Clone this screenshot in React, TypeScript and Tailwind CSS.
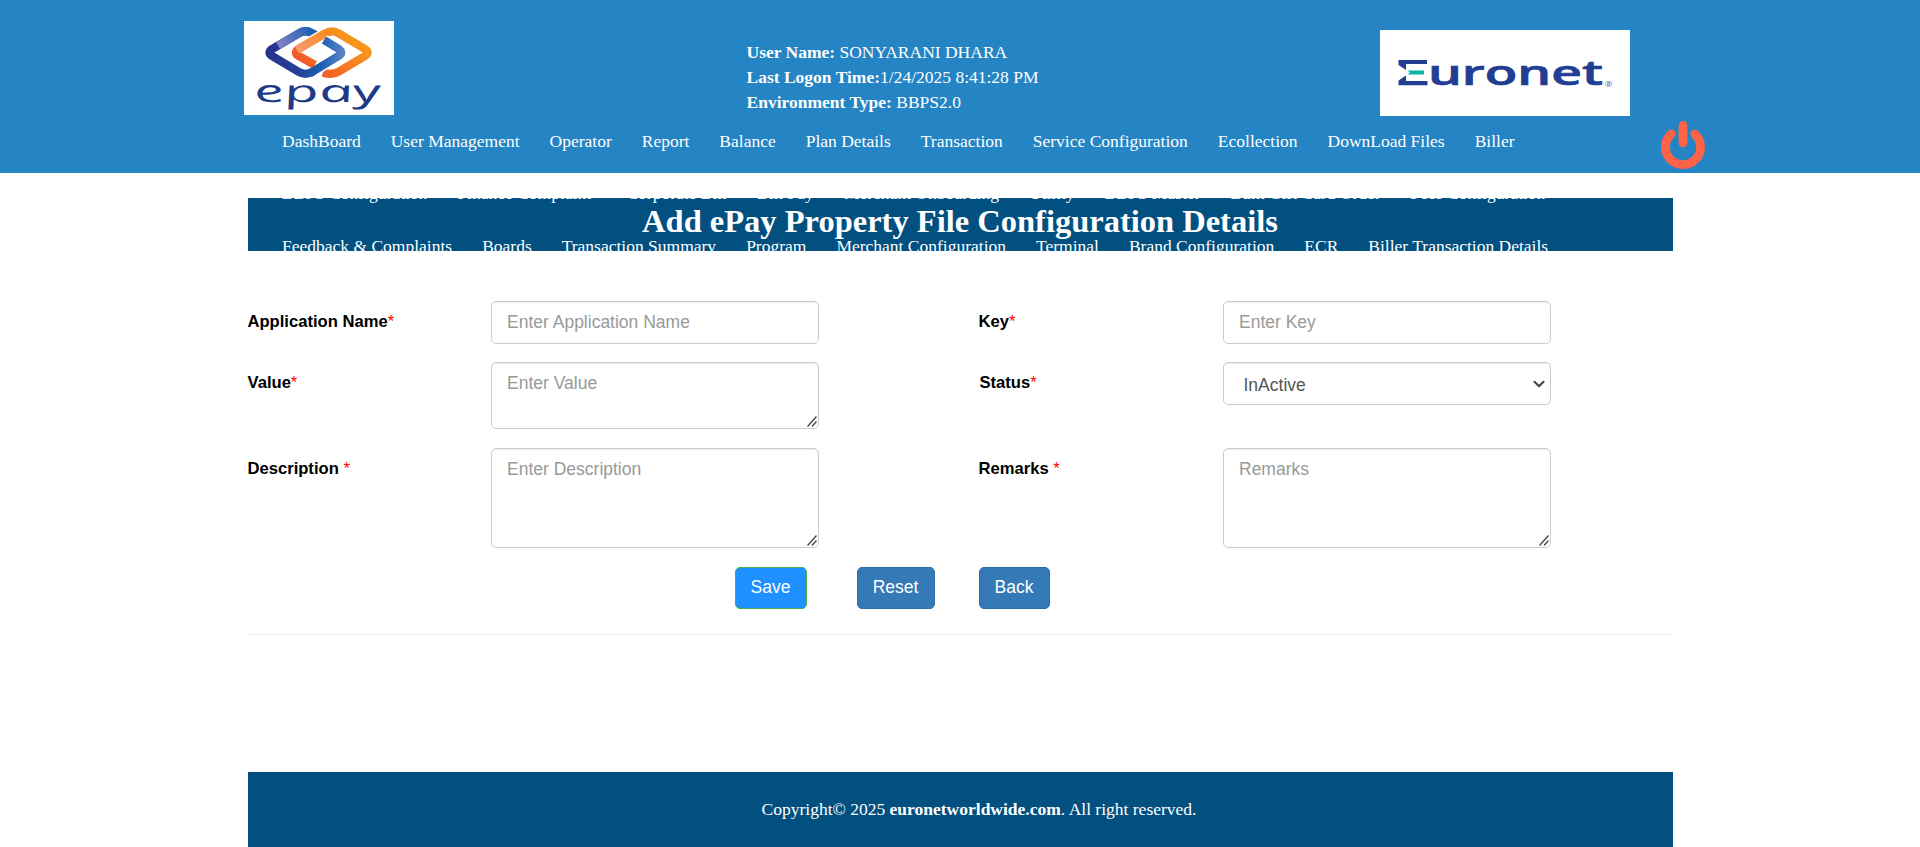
import React from "react";
import { ChevronDown } from "lucide-react";

const NAV_ROWS: string[][] = [
  [
    "DashBoard",
    "User Management",
    "Operator",
    "Report",
    "Balance",
    "Plan Details",
    "Transaction",
    "Service Configuration",
    "Ecollection",
    "DownLoad Files",
    "Biller",
  ],
  [
    "BBPS Configuration",
    "Finance Complaint",
    "Corporate Bill",
    "Bill Pay",
    "Merchant Onboarding",
    "Utility",
    "BBPS Master",
    "Bulk Gift Card Order",
    "Fees Configuration",
  ],
  [
    "Feedback & Complaints",
    "Boards",
    "Transaction Summary",
    "Program",
    "Merchant Configuration",
    "Terminal",
    "Brand Configuration",
    "ECR",
    "Biller Transaction Details",
  ],
];

const ORANGE_BAND =
  "M71 44 L55 35.200 Q49 31.500 55 27.800 L81 12.500 Q88 8.200 95 12.500 L120.500 27.800 Q126.500 31.500 120.500 35.200 L95 50.500 Q88 54.800 79 51.500";

function EpayLogo() {
  return (
    <svg width="150" height="94" viewBox="0 0 150 94" className="shrink-0 bg-white" role="img" aria-label="epay">
      <defs>
        <linearGradient id="ep-blue" gradientUnits="userSpaceOnUse" x1="22" y1="0" x2="101" y2="0">
          <stop offset="0" stopColor="#26328c" />
          <stop offset="0.4" stopColor="#26409a" />
          <stop offset="0.7" stopColor="#1c60b0" />
          <stop offset="1" stopColor="#5f86c8" />
        </linearGradient>
        <linearGradient id="ep-orange" gradientUnits="userSpaceOnUse" x1="62" y1="54" x2="96" y2="12">
          <stop offset="0" stopColor="#f0512a" />
          <stop offset="1" stopColor="#f8931d" />
        </linearGradient>
        <linearGradient id="ep-lilac" gradientUnits="userSpaceOnUse" x1="34" y1="24" x2="68" y2="10">
          <stop offset="0" stopColor="#8583c6" />
          <stop offset="1" stopColor="#1f61b0" />
        </linearGradient>
        <linearGradient id="ep-peach" gradientUnits="userSpaceOnUse" x1="52" y1="29" x2="82" y2="11">
          <stop offset="0" stopColor="#f79a74" />
          <stop offset="1" stopColor="#f8901f" />
        </linearGradient>
      </defs>
      <g fill="none" strokeWidth="8.300" strokeLinejoin="round">
        <path
          d="M72 14.500 L67.500 12 Q61.500 8.500 55.500 12 L28.500 27.800 Q22.500 31.500 28.500 35.200 L54.500 50.800 Q61.500 55 68.500 50.800"
          stroke="url(#ep-blue)"
        />
        <path d="M34 24.500 L55.500 12 Q61.500 8.500 67.500 12 L72 14.500" stroke="url(#ep-lilac)" />
        <path d={ORANGE_BAND} stroke="white" strokeWidth="11" />
        <path d={ORANGE_BAND} stroke="url(#ep-orange)" />
        <path d="M53 29 L55 27.800 L81 12.500" stroke="url(#ep-peach)" />
        <path d="M74 47.500 L94 35.500 Q100.500 31.500 94 27.500 L80 19" stroke="white" strokeWidth="11" />
        <path d="M66 52.300 L68.500 50.800 L94 35.300 Q100.500 31.500 94 27.500 L80 19" stroke="url(#ep-blue)" />
      </g>
      <g transform="translate(13 81) skewX(20)">
        <text
          x="0"
          y="0"
          fill="#1f3b86"
          fontFamily="'Open Sans', sans-serif"
          fontStyle="italic"
          fontWeight="400"
          fontSize="31"
          textLength="127"
          lengthAdjust="spacingAndGlyphs"
        >
          epay
        </text>
      </g>
    </svg>
  );
}

function EuronetLogo() {
  return (
    <svg width="250" height="86" viewBox="0 0 250 86" className="shrink-0 bg-white" role="img" aria-label="Euronet">
      <path d="M18.500 30 H47 V34 H26 V40 L18.500 35 Z" fill="#223e92" />
      <path d="M18.500 55.300 H47.500 V51 H26 V45.500 L18.500 50.500 Z" fill="#223e92" />
      <path d="M27.500 40.500 H44 V44.500 H27.500 L30 42.500 Z" fill="#0ab5a8" />
      <text
        x="48"
        y="55"
        fill="#223e92"
        fontFamily="'Open Sans', sans-serif"
        fontWeight="600"
        fontSize="34.500"
        textLength="175"
        lengthAdjust="spacingAndGlyphs"
        stroke="#223e92"
        strokeWidth="0.700"
      >
        uronet
      </text>
      <text
        x="224.500"
        y="57"
        fill="#4a62a8"
        fontFamily="'Open Sans', sans-serif"
        fontSize="6.500"
        textLength="8"
        lengthAdjust="spacingAndGlyphs"
      >
        ®
      </text>
    </svg>
  );
}

function PowerIcon() {
  return (
    <svg width="46" height="50" viewBox="0 0 46 50" fill="none" stroke="#ff6347" strokeWidth="8.800" strokeLinecap="round">
      <path d="M11.200 13.900 A17.600 17.600 0 1 0 34.800 13.900" />
      <path d="M23 5.400 V22.800" />
    </svg>
  );
}

function Label({ text, className = "" }: { text: string; className?: string }) {
  return (
    <label className={`shrink-0 pt-[9px] text-[16.6px] leading-[23px] font-bold whitespace-pre text-black ${className}`}>
      {text}
      <span className="font-normal text-[#ff0000]">*</span>
    </label>
  );
}

const FIELD =
  "block w-[328px] rounded-[5px] border border-[#ccc] bg-white px-[15.500px] py-[7.500px] text-[17.5px] leading-[25px] text-[#555] shadow-[inset_0_1px_1px_rgba(0,0,0,0.075)] placeholder:text-[#999] focus:outline-none";

function TextArea({ placeholder, className }: { placeholder: string; className: string }) {
  return (
    <div className="relative w-[328px] self-start">
      <textarea className={`${FIELD} resize-none ${className}`} placeholder={placeholder} />
      <svg
        width="10"
        height="11"
        viewBox="0 0 10 11"
        className="absolute right-[2px] bottom-[2px]"
        stroke="#4a4a4a"
        strokeWidth="1.400"
      >
        <path d="M0.500 10.500 L9.500 0.500 M5 10.500 L9.500 5.500" />
      </svg>
    </div>
  );
}

export default function App() {
  return (
    <div className="flex h-[847px] flex-col overflow-hidden bg-white font-['Liberation_Sans',Arial,sans-serif]">
      <header className="relative z-10 h-[173px] shrink-0 bg-[#2484c4] font-['Liberation_Serif','Times_New_Roman',serif] text-[17.5px] text-white">
        <div className="flex h-[116px] items-start pl-[244px]">
          <div className="pt-[21px]">
            <EpayLogo />
          </div>
          <div className="ml-[352.500px] w-[633.500px] pt-[40px] leading-[25px]">
            <p>
              <b>User Name:</b> SONYARANI DHARA
            </p>
            <p>
              <b>Last Logon Time:</b>1/24/2025 8:41:28 PM
            </p>
            <p>
              <b>Environment Type:</b> BBPS2.0
            </p>
          </div>
          <div className="pt-[30px]">
            <EuronetLogo />
          </div>
        </div>
        <div className="flex">
          <nav className="w-[1413px] pl-[282px]">
            {NAV_ROWS.map((row) => (
              <ul key={row[0]} className="flex h-[52.5px] gap-[30px] pt-[12.5px] leading-[25px] whitespace-nowrap">
                {row.map((item) => (
                  <li key={item} className={item === "Finance Complaint" ? "min-w-[139px]" : ""}>
                    {item}
                  </li>
                ))}
              </ul>
            ))}
          </nav>
          <button type="button" aria-label="Log out" className="ml-[247px] h-[50px] pt-[4px]">
            <PowerIcon />
          </button>
        </div>
      </header>

      <main className="mx-auto mt-[25px] flex w-[1425px] grow flex-col">
        <h1 className="h-[53px] shrink-0 bg-[#01507f] pt-[5px] text-center font-['Liberation_Serif','Times_New_Roman',serif] text-[32.5px] leading-[36px] font-bold text-white">
          Add ePay Property File Configuration Details
        </h1>

        <form className="mt-[50px] flex flex-col">
          <div className="flex h-[61px]">
            <Label text="Application Name" className="w-[243px]" />
            <div className="w-[488px]">
              <input className={FIELD + " h-[43px]"} placeholder="Enter Application Name" />
            </div>
            <Label text="Key" className="w-[244px]" />
            <input className={FIELD + " h-[43px]"} placeholder="Enter Key" />
          </div>
          <div className="flex h-[86px]">
            <Label text="Value" className="w-[243px]" />
            <div className="w-[488px]">
              <TextArea className="h-[67px]" placeholder="Enter Value" />
            </div>
            <Label text="Status" className="w-[244px] pl-px" />
            <div className="relative h-[43px] w-[328px]">
              <select className={FIELD + " h-[43px] appearance-none pt-[9px] pb-[6px] pl-[20px]"} defaultValue="InActive">
                <option>InActive</option>
                <option>Active</option>
              </select>
              <ChevronDown
                className="pointer-events-none absolute top-[13px] right-[3px] text-[#444]"
                size={18}
                strokeWidth={2.8}
              />
            </div>
          </div>
          <div className="flex h-[119px]">
            <Label text="Description " className="w-[243px]" />
            <div className="w-[488px]">
              <TextArea className="h-[100px]" placeholder="Enter Description" />
            </div>
            <Label text="Remarks " className="w-[244px]" />
            <TextArea className="h-[100px]" placeholder="Remarks" />
          </div>
          <div className="flex h-[42px] pl-[487px] text-[17.5px] leading-[25px] text-white">
            <div className="w-[122px]">
              <button type="button" className="h-[42px] w-[72px] rounded-[5px] border border-[#4cae4c] bg-[#1e90ff] pb-[2px]">
                Save
              </button>
            </div>
            <div className="w-[122px]">
              <button type="button" className="h-[42px] w-[78px] rounded-[5px] border border-[#2e6da4] bg-[#337ab7] pb-[2px]">
                Reset
              </button>
            </div>
            <button type="button" className="h-[42px] w-[71px] rounded-[5px] border border-[#2e6da4] bg-[#337ab7] pb-[2px]">
              Back
            </button>
          </div>
        </form>

        <hr className="mt-[25px] border-t border-[#eee]" />

        <footer className="mt-auto h-[75px] shrink-0 bg-[#01507f] pt-[25px] pl-[38px] text-center font-['Liberation_Serif','Times_New_Roman',serif] text-[17.5px] leading-[25px] text-white">
          Copyright© 2025 <b>euronetworldwide.com</b>. All right reserved.
        </footer>
      </main>
    </div>
  );
}
